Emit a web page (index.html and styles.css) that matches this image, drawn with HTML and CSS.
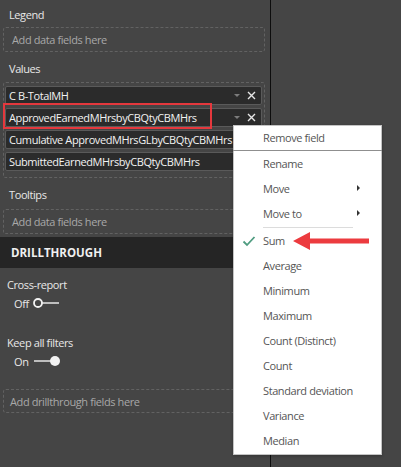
FILE: index.html
```html
<!DOCTYPE html>
<html>
<head>
<meta charset="utf-8">
<link rel="stylesheet" href="styles.css">
</head>
<body>
<div class="app">
  <aside class="pane">
    <div class="label">Legend</div>
    <div class="drop">Add data fields here</div>

    <div class="label label-values">Values</div>
    <div class="well">
      <div class="field"><span class="name">C B-TotalMH</span><span class="caret"></span><svg class="x" width="9" height="9" viewBox="0 0 9 9"><path d="M1 1 L8 8 M8 1 L1 8"/></svg></div>
      <div class="field"><span class="name">ApprovedEarnedMHrsbyCBQtyCBMHrs</span><span class="caret"></span><svg class="x" width="9" height="9" viewBox="0 0 9 9"><path d="M1 1 L8 8 M8 1 L1 8"/></svg></div>
      <div class="field"><span class="name">Cumulative ApprovedMHrsGLbyCBQtyCBMHrs</span></div>
      <div class="field"><span class="name">SubmittedEarnedMHrsbyCBQtyCBMHrs</span></div>
    </div>

    <div class="label label-tooltips">Tooltips</div>
    <div class="drop drop-tooltips">Add data fields here</div>

    <div class="band">DRILLTHROUGH</div>

    <div class="opt">Cross-report</div>
    <div class="toggle"><span>Off</span>
      <svg width="30" height="12" viewBox="0 0 30 12"><circle cx="6" cy="6" r="4" fill="none" stroke="#f2f2f2" stroke-width="1.8"/><line x1="10" y1="6" x2="27" y2="6" stroke="#f2f2f2" stroke-width="1.4"/></svg>
    </div>
    <div class="opt opt-keep">Keep all filters</div>
    <div class="toggle"><span>On</span>
      <svg width="30" height="12" viewBox="0 0 30 12"><line x1="2" y1="6" x2="20" y2="6" stroke="#f2f2f2" stroke-width="1.4"/><circle cx="23" cy="6" r="5" fill="#f2f2f2"/></svg>
    </div>
    <div class="drop drop-drill">Add drillthrough fields here</div>
  </aside>
  <div class="canvas"></div>

  <div class="highlight"></div>

  <div class="menu">
    <div class="item item-first">Remove field</div>
    <div class="sep-full"></div>
    <div class="item">Rename</div>
    <div class="item">Move<span class="sub"></span></div>
    <div class="item">Move to<span class="sub"></span></div>
    <div class="sep"></div>
    <div class="item"><svg class="check" width="14" height="12" viewBox="0 0 14 12"><path d="M1.5 6.5 L5 10 L12.5 2" fill="none" stroke="#4f9c80" stroke-width="1.8"/></svg>Sum</div>
    <div class="item">Average</div>
    <div class="item">Minimum</div>
    <div class="item">Maximum</div>
    <div class="item">Count (Distinct)</div>
    <div class="item">Count</div>
    <div class="item">Standard deviation</div>
    <div class="item">Variance</div>
    <div class="item">Median</div>
  </div>

  <svg class="arrow" width="82" height="26" viewBox="0 0 82 26"><path d="M3 13 L20 4 L20 10.5 L79 10.5 L79 15.5 L20 15.5 L20 22 Z" fill="#ec3b3f"/></svg>
</div>
</body>
</html>
```

FILE: styles.css
```css
* { box-sizing: border-box; }
html, body { margin: 0; padding: 0; }
body {
  width: 401px;
  height: 467px;
  overflow: hidden;
  background: #454545;
  font-family: "Open Sans", "Noto Sans", sans-serif;
  font-size: 11px;
  letter-spacing: -0.4px;
}
.app {
  position: relative;
  display: flex;
  width: 401px;
  height: 467px;
}
.pane {
  width: 271px;
  flex: none;
  background: #454545;
  border-right: 1px solid #0d0d0d;
  padding: 0 5px 0 3px;
  display: flex;
  flex-direction: column;
}
.canvas {
  flex: 1;
  background: #454545;
}
.label {
  height: 16px;
  line-height: 16px;
  margin-top: 7px;
  padding-left: 6px;
  color: #e8e8e8;
}
.label-values { margin-top: 9px; }
.label-tooltips { margin-top: 9px; }
.drop {
  height: 25px;
  margin-top: 4px;
  border: 1px dashed #626262;
  border-radius: 3px;
  color: #a8a8a8;
  padding-left: 8px;
  display: flex;
  align-items: center;
}
.drop-tooltips { margin-top: 6px; }
.drop-drill {
  margin-top: 20px;
  padding-left: 6px;
  height: 24px;
}
.well {
  margin-top: 5px;
  height: 96px;
  border: 1px dashed #626262;
  border-radius: 3px;
  padding: 3px 2px 0 1px;
  display: flex;
  flex-direction: column;
  gap: 3px;
}
.field {
  height: 19px;
  flex: none;
  display: flex;
  align-items: center;
  background: #2b2b2b;
  border: 1px solid #5a5a5a;
  border-radius: 2px;
  padding: 0 5px 0 3px;
  color: #f2f2f2;
  white-space: nowrap;
  overflow: hidden;
}
.name { flex: 1; overflow: hidden; }
.caret {
  width: 0; height: 0;
  border-left: 3.5px solid transparent;
  border-right: 3.5px solid transparent;
  border-top: 3.5px solid #7c7c7c;
  margin-right: 7px;
}
.x path { stroke: #e6e6e6; stroke-width: 1.4; fill: none; }
.band {
  margin: 3px -5px 0 -3px;
  height: 31px;
  background: #252525;
  color: #f0f0f0;
  font-weight: 700;
  font-size: 11.5px;
  letter-spacing: 0;
  padding-left: 11px;
  display: flex;
  align-items: center;
}
.opt {
  height: 16px;
  line-height: 16px;
  margin-top: 9px;
  padding-left: 4px;
  color: #e8e8e8;
}
.opt-keep { margin-top: 24px; }
.toggle {
  height: 16px;
  margin-top: 2px;
  padding-left: 11px;
  display: flex;
  align-items: center;
  gap: 3px;
  color: #e8e8e8;
}
.toggle svg { display: block; }
.highlight {
  position: absolute;
  left: 3px;
  top: 103px;
  width: 209px;
  height: 26px;
  border: 2px solid #e5383d;
}
.menu {
  position: absolute;
  left: 233px;
  top: 125px;
  width: 149px;
  height: 330px;
  background: #ffffff;
  border: 1px solid #c4c4c4;
  box-shadow: 0 1px 3px rgba(0,0,0,0.25);
  color: #555555;
}
.item {
  position: relative;
  height: 25px;
  line-height: 25px;
  padding-left: 29px;
}
.item-first { height: 24px; line-height: 24px; }
.sep-full { height: 1px; background: #8f8f8f; margin: 0 -1px; }
.sep { height: 1px; background: #dcdcdc; margin: 1px 29px 0 29px; width: 90px; }
.sub {
  position: absolute;
  right: 21px;
  top: 9px;
  width: 0; height: 0;
  border-top: 3.5px solid transparent;
  border-bottom: 3.5px solid transparent;
  border-left: 3.5px solid #333;
}
.check {
  position: absolute;
  left: 8px;
  top: 7px;
}
.arrow {
  position: absolute;
  left: 290px;
  top: 228px;
}
```
